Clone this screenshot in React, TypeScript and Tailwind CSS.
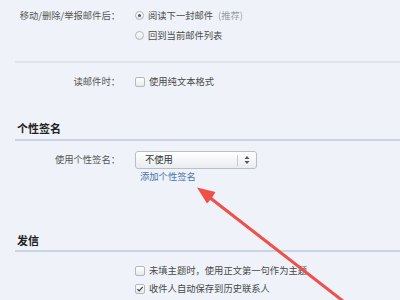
import React from 'react';

const font = { fontFamily: '"Noto Sans CJK SC", "Noto Sans", sans-serif' };

function Radio({ checked }: { checked?: boolean }) {
  return (
    <span className="w-[9px] h-[9px] rounded-full border border-[#b4b8be] bg-gradient-to-b from-white to-[#e4e7eb] flex items-center justify-center shrink-0">
      {checked && <span className="w-[3px] h-[3px] rounded-full bg-[#555]" />}
    </span>
  );
}

function Check({ checked }: { checked?: boolean }) {
  return (
    <span className="w-[10px] h-[10px] rounded-[2px] border border-[#b4b8be] bg-gradient-to-b from-white to-[#e6e8ec] flex items-center justify-center shrink-0">
      {checked && (
        <svg viewBox="0 0 10 10" className="w-[8px] h-[8px]">
          <path d="M1.8 5.2 L4 7.4 L8.4 2.4" fill="none" stroke="#444" strokeWidth="1.6" />
        </svg>
      )}
    </span>
  );
}

function Row({ label, children, className = '' }: { label?: string; children: React.ReactNode; className?: string }) {
  return (
    <div className={`flex items-center ${className}`}>
      <div className="w-[105px] text-right text-[#555] shrink-0">{label}</div>
      <div className="ml-[15px] flex items-center gap-[4px]">{children}</div>
    </div>
  );
}

export default function App() {
  return (
    <div className="relative w-[400px] h-[300px] overflow-hidden bg-[#eff3f9] text-[9.3px] leading-none pl-[15px] pt-[6px]" style={font}>
      <Row label="移动/删除/举报邮件后：" className="h-[20px]">
        <Radio checked />
        <span className="text-[#4a4a4a]">阅读下一封邮件</span>
        <span className="text-[#9aa0a8] ml-[1px]">(推荐)</span>
      </Row>
      <Row className="h-[20px]">
        <Radio />
        <span className="text-[#4a4a4a]">回到当前邮件列表</span>
      </Row>
      <div className="mt-[15px] h-[2px] bg-[#e0e5ed]" />
      <Row label="读邮件时：" className="h-[20px] mt-[9px]">
        <Check />
        <span className="text-[#4a4a4a]">使用纯文本格式</span>
      </Row>

      <div className="mt-[28px] h-[16px] flex items-center pl-[2px] text-[11px] font-bold text-[#222]">个性签名</div>
      <div className="mt-[3px] h-[2px] bg-[#c8d4e3]" />
      <Row label="使用个性签名：" className="h-[18px] mt-[10px]">
        <div className="w-[122px] h-[18px] rounded-[3px] border border-[#b9bfc8] bg-gradient-to-b from-white to-[#e9ecf0] flex items-center shadow-[inset_0_1px_0_#fff]">
          <span className="flex-1 pl-[9px] text-[#333]">不使用</span>
          <span className="w-px h-[11px] bg-[#c5cad2]" />
          <svg viewBox="0 0 8 10" className="w-[8px] h-[10px] mx-[5px]">
            <path d="M4 1 L6.5 4 L1.5 4 Z M4 9 L6.5 6 L1.5 6 Z" fill="#555" />
          </svg>
        </div>
      </Row>
      <Row className="h-[14px] mt-px">
        <span className="ml-[5px] text-[#4a74ab]">添加个性签名</span>
      </Row>

      <div className="mt-[48px] h-[16px] flex items-center pl-[2px] text-[11px] font-bold text-[#222]">发信</div>
      <div className="mt-[2px] h-[2px] bg-[#c8d4e3]" />
      <Row className="h-[18px] mt-[10px]">
        <Check />
        <span className="text-[#4a4a4a]">未填主题时，使用正文第一句作为主题</span>
      </Row>
      <Row className="h-[18px]">
        <Check checked />
        <span className="text-[#4a4a4a]">收件人自动保存到历史联系人</span>
      </Row>

      <svg className="absolute inset-0 pointer-events-none" width="400" height="300" viewBox="0 0 400 300">
        <line x1="352" y1="308" x2="209" y2="197" stroke="#ef5049" strokeWidth="3" strokeLinecap="round" />
        <path d="M197 187.5 L215.5 192 L212 198 L207 203.5 Z" fill="#ef5049" />
      </svg>
    </div>
  );
}
